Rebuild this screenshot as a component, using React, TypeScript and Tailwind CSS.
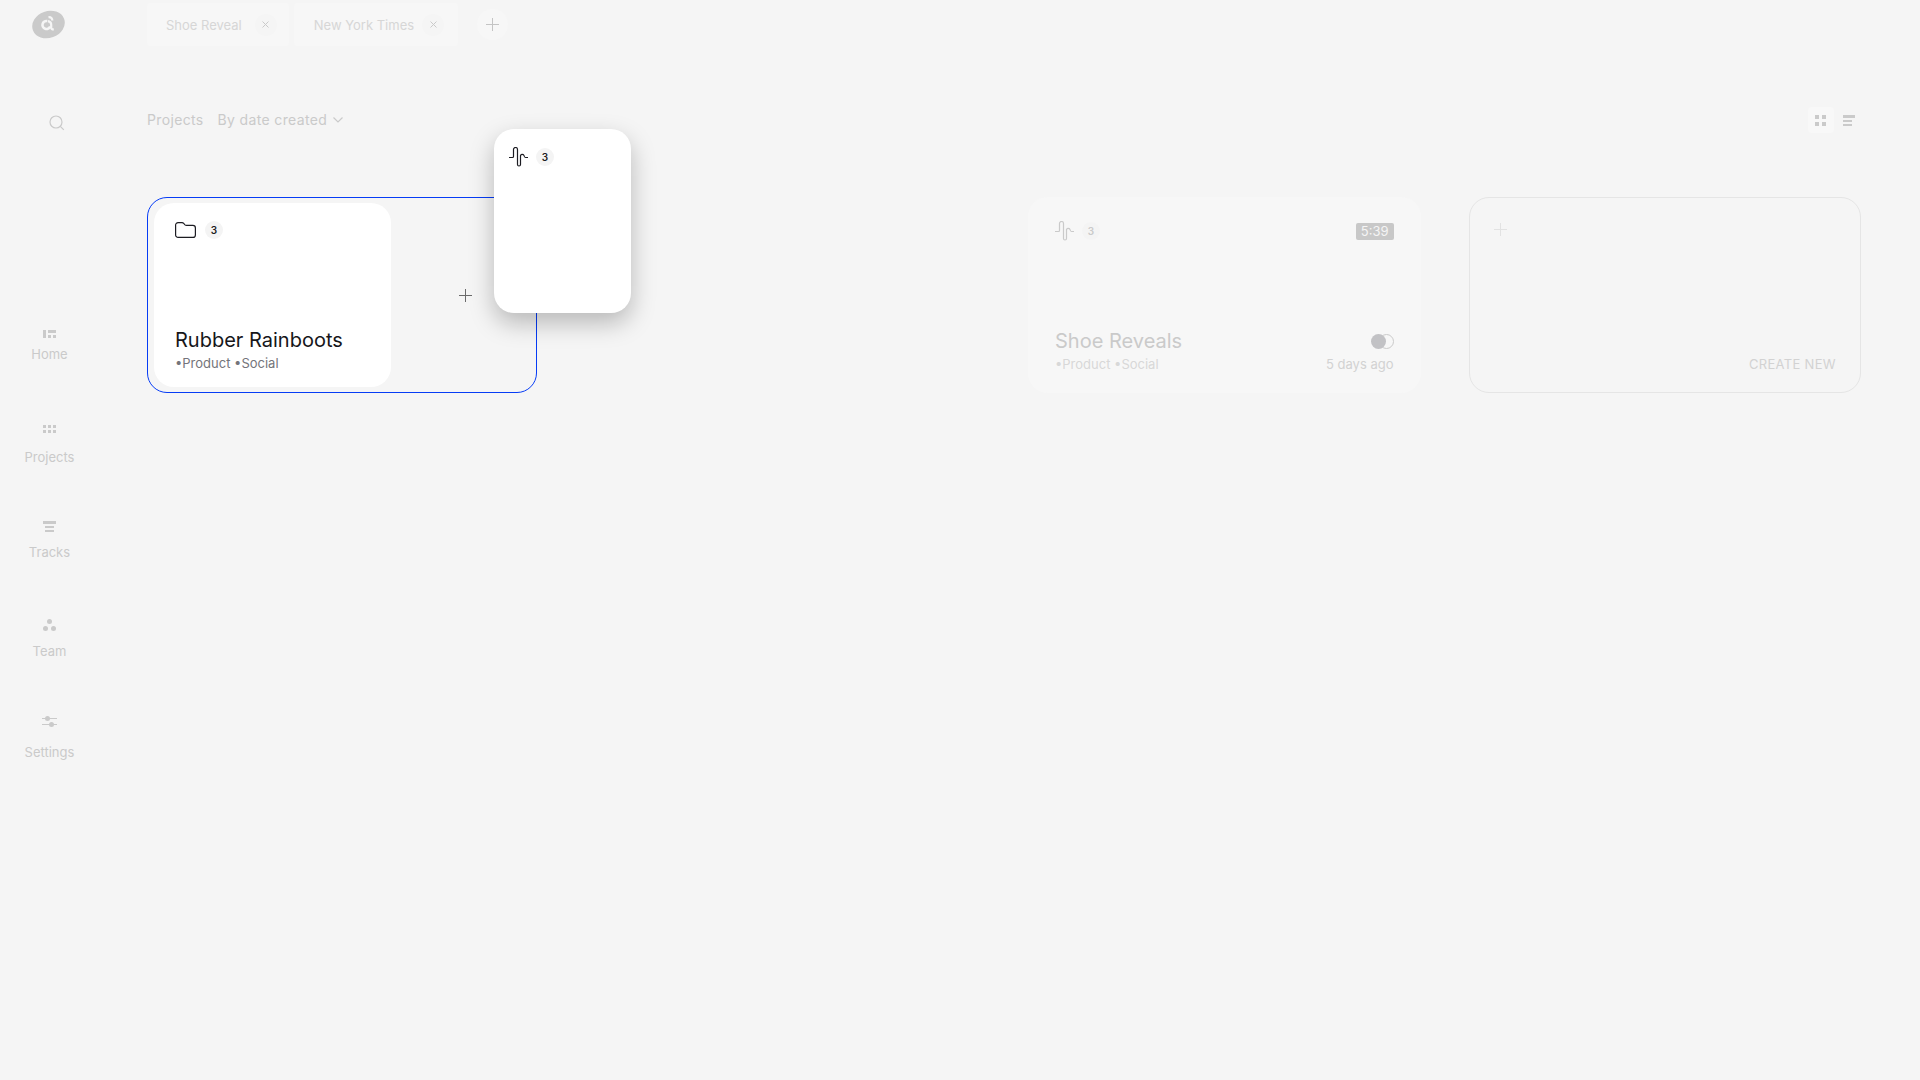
import React, { useState } from "react";

type Tab = { id: string; label: string; className: string };
type NavItem = { label: string; icon: React.ReactNode; className: string };

const initialTabs: Tab[] = [
  { id: "shoe", label: "Shoe Reveal", className: "gap-[13px] pr-3 pl-[19px]" },
  { id: "nyt", label: "New York Times", className: "gap-2 pr-[14px] pl-5" },
];

const navItems: NavItem[] = [
  { label: "Home", icon: <HomeIcon />, className: "h-[95px] gap-2" },
  { label: "Projects", icon: <DotsIcon />, className: "h-[96px] gap-4" },
  { label: "Tracks", icon: <TracksIcon />, className: "h-[98px] gap-3" },
  { label: "Team", icon: <TeamIcon />, className: "h-[97px] gap-3" },
  { label: "Settings", icon: <SlidersIcon />, className: "gap-4" },
];

function Logo() {
  return (
    <svg width="33" height="29" viewBox="0 0 33 29">
      <ellipse cx="16.5" cy="14.5" rx="16.6" ry="13.4" transform="rotate(-20 16.5 14.5)" fill="#cacaca" />
      <g fill="none" stroke="#f5f5f5">
        <path d="M15.2 11a4 4 0 1 0 3 5.400" strokeWidth="2.6" />
        <path d="M16.500 7.200c2.800-.2 3.800 1.300 3.800 3.300M15.800 11.200c1.800.2 3.400 1.300 3.400 3.500v2.800c0 1.400.9 2 2.600 1.900" strokeWidth="2.2" />
      </g>
    </svg>
  );
}

function HomeIcon() {
  return (
    <svg width="13" height="8" fill="#cacaca">
      <path d="M0 0h3v8H0zM5 0h8v3H5zM5 5h3v3H5zM10 5h3v3h-3z" />
    </svg>
  );
}

function DotsIcon() {
  return (
    <svg width="13" height="8" fill="#cacaca">
      <path d="M0 0h3v3H0zM5 0h3v3H5zM10 0h3v3h-3zM0 5h3v3H0zM5 5h3v3H5zM10 5h3v3h-3z" />
    </svg>
  );
}

function TracksIcon() {
  return (
    <svg width="13" height="11" fill="#cacaca">
      <path d="M0 0h13v3H0zM2 5h9v2H2zM2 9h9v2H2z" />
    </svg>
  );
}

function TeamIcon() {
  return (
    <svg width="13" height="12" fill="#cacaca">
      <circle cx="6.5" cy="2.5" r="2.5" />
      <circle cx="2.5" cy="9.5" r="2.5" />
      <circle cx="10.5" cy="9.5" r="2.5" />
    </svg>
  );
}

function SlidersIcon() {
  return (
    <svg width="15" height="12" fill="#cacaca">
      <path d="M0 2h15v1H0zM0 8h15v1H0z" />
      <circle cx="5.5" cy="2.5" r="2.5" />
      <circle cx="9.5" cy="8.5" r="2.5" />
    </svg>
  );
}

function Plus({ color }: { color: string }) {
  return (
    <svg width="13" height="13" stroke={color} strokeWidth="1">
      <path d="M6.5 0v13M0 6.5h13" />
    </svg>
  );
}

function Wave({ color }: { color: string }) {
  return (
    <svg width="19" height="20" viewBox="0 0 19 20" fill="none" stroke={color} strokeWidth="1.2">
      <path d="M0 10.5h3.5q1 0 1-1V2.500a2 2 0 0 1 4 0v15a1.500 1.500 0 0 0 3 0V8.500a2 2 0 0 1 3.500 0q.4 2 1.500 2H19" />
    </svg>
  );
}

function Folder() {
  return (
    <svg width="21" height="16" fill="none" stroke="#1c1c22" strokeWidth="1.2">
      <path d="M.6 3.100a2.500 2.500 0 0 1 2.500-2.500h3.900q1 0 1.700.8l1.300 1.400q.6.600 1.500.600h6.400a2.500 2.500 0 0 1 2.500 2.500v7a2.500 2.500 0 0 1-2.500 2.500H3.100a2.500 2.500 0 0 1-2.500-2.500z" />
    </svg>
  );
}

function Count({ value, className }: { value: number; className: string }) {
  return (
    <span className={`flex h-[18px] w-[18px] items-center justify-center rounded-full bg-[#f4f4f4] text-[10px] font-semibold ${className}`}>
      {value}
    </span>
  );
}

export default function App() {
  const [tabs, setTabs] = useState<Tab[]>(initialTabs);

  return (
    <div className="flex min-h-screen bg-[#f5f5f5] font-['Inter','Liberation_Sans',sans-serif] text-[13px] leading-4 text-[#cacaca]">
      <aside className="flex w-[99px] shrink-0 flex-col items-center pt-[10px]">
        <a href="#start" aria-label="Start page" className="mr-0.5"><Logo /></a>
        <button type="button" aria-label="Search" className="mt-[76px] ml-[14px]">
          <svg width="16" height="16" fill="none" stroke="#cacaca" strokeWidth="1.2">
            <circle cx="7" cy="7" r="6" />
            <path d="M11.3 11.3l3.5 3.5" />
          </svg>
        </button>
        <nav className="mt-[199px] flex flex-col items-center">
          {navItems.map(item => (
            <a key={item.label} href={`#${item.label.toLowerCase()}`} className={`flex flex-col items-center ${item.className}`}>
              {item.icon}
              <span>{item.label}</span>
            </a>
          ))}
        </nav>
      </aside>

      <main className="min-w-0 flex-1 pr-[59px] pl-12">
        <header className="flex items-center pt-[3px]">
          <div className="flex gap-[5px]">
            {tabs.map(t => (
              <div key={t.id} className={`flex h-[43px] items-center rounded bg-[#f7f7f7] ${t.className}`}>
                <span className="text-[#d6d6d6]">{t.label}</span>
                <button
                  type="button"
                  aria-label={`Close ${t.label}`}
                  className="flex h-[22px] w-[22px] items-center justify-center rounded-full bg-[#f5f5f5]"
                  onClick={() => setTabs(tabs.filter(x => x.id !== t.id))}
                >
                  <svg width="7" height="7" stroke="#cacaca"><path d="M.5.5l6 6M6.5.5l-6 6" /></svg>
                </button>
              </div>
            ))}
          </div>
          <button type="button" aria-label="New tab" className="ml-[19px] flex h-[31px] w-[31px] items-center justify-center rounded-full bg-[#f7f7f7]">
            <Plus color="#c4c4c4" />
          </button>
        </header>

        <div className="mt-[61px] flex h-[26px] items-center justify-between">
          <div className="flex items-center gap-[14px] text-sm tracking-wide">
            <h1>Projects</h1>
            <button type="button" className="flex items-center gap-1.5">
              By date created
              <svg width="10" height="6" fill="none" stroke="#cacaca" strokeWidth="1.2"><path d="M.5.5L5 5L9.5.5" /></svg>
            </button>
          </div>
          <div className="flex items-center">
            <button type="button" aria-label="Grid view" className="flex h-[26px] w-[26px] items-center justify-center rounded bg-[#f8f8f8]">
              <svg width="12" height="11" fill="#cacaca"><path d="M0 0h4v4H0zM7 0h4v4H7zM0 7h4v4H0zM7 7h4v4H7z" /></svg>
            </button>
            <button type="button" aria-label="List view" className="flex h-[26px] w-[27px] items-center justify-end pr-1.5">
              <svg width="12" height="11" fill="#cacaca"><path d="M0 0h12v3H0zM0 5h9v2H0zM0 9h9v2H0z" /></svg>
            </button>
          </div>
        </div>

        <section className="mt-16 grid grid-cols-4 gap-12">
          <div className="relative mr-[3px] flex h-[196px] rounded-[20px] border border-[#063cf5] py-[5px] pl-1.5">
            <article className="flex w-[237px] flex-col justify-between rounded-[20px] bg-white pt-[18px] pr-5 pb-4 pl-[21px]">
              <div className="flex items-center gap-[9px]">
                <Folder />
                <Count value={3} className="text-[#1c1c22]" />
              </div>
              <div>
                <h2 className="text-xl leading-[30px] whitespace-nowrap text-[#16161a]">Rubber Rainboots</h2>
                <p className="text-[#74747a]">•Product •Social</p>
              </div>
            </article>
            <button type="button" aria-label="Add to project" className="flex flex-1 items-center justify-center pl-1">
              <Plus color="#6b6b6b" />
            </button>
            {/* track being dragged onto the project */}
            <article className="absolute -top-[69px] left-[346px] h-[184px] w-[137px] rounded-[20px] bg-white px-[15px] py-[18px] shadow-[0_10px_24px_rgba(0,0,0,0.25)]">
              <div className="flex items-center gap-2">
                <Wave color="#1c1c22" />
                <Count value={3} className="text-[#1c1c22]" />
              </div>
            </article>
          </div>

          <article className="col-start-3 flex h-[196px] flex-col justify-between rounded-[20px] bg-[#f7f7f7] px-[27px] pt-6 pb-[21px]">
            <div className="flex items-center justify-between">
              <div className="flex items-center gap-2">
                <Wave color="#cacaca" />
                <Count value={3} className="text-[#cacaca]" />
              </div>
              <time className="rounded-[2px] bg-[#c8c8c8] px-[5px] text-[13px] leading-[17px] text-[#f5f5f5]">5:39</time>
            </div>
            <div>
              <div className="flex items-center justify-between">
                <h2 className="text-xl leading-[30px]">Shoe Reveals</h2>
                <svg width="23" height="15">
                  <circle cx="15.5" cy="7.5" r="7" fill="none" stroke="#cacaca" />
                  <circle cx="7.5" cy="7.5" r="7.5" fill="#c2c2c5" />
                </svg>
              </div>
              <div className="flex justify-between text-[#d8d8d8]">
                <p>•Product •Social</p>
                <p className="text-[#d2d2d2]">5 days ago</p>
              </div>
            </div>
          </article>

          <button type="button" className="flex h-[196px] flex-col justify-between rounded-[20px] border border-[#e5e5e5] px-6 pt-[25px] pb-5">
            <Plus color="#e2e2e2" />
            <span className="self-end tracking-wide text-[#d2d2d2]">CREATE NEW</span>
          </button>
        </section>
      </main>
    </div>
  );
}
